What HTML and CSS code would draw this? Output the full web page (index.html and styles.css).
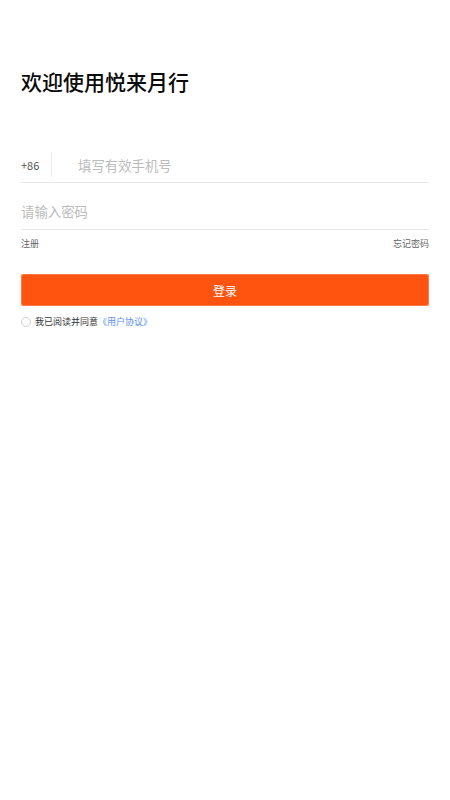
FILE: index.html
```html
<!DOCTYPE html>
<html lang="zh-CN">
<head>
<meta charset="utf-8">
<title>登录</title>
<link rel="stylesheet" href="styles.css">
</head>
<body>
<div class="page">
  <h1 class="title">欢迎使用悦来月行</h1>
  <div class="field phone">
    <span class="code">+86</span>
    <span class="divider"></span>
    <input class="input" type="tel" placeholder="填写有效手机号">
  </div>
  <div class="field pwd">
    <input class="input" type="password" placeholder="请输入密码">
  </div>
  <div class="links">
    <span>注册</span>
    <span>忘记密码</span>
  </div>
  <button class="login" type="button">登录</button>
  <div class="agree">
    <span class="radio"></span>
    <span class="agree-text">我已阅读并同意</span><span class="agree-link">《用户协议》</span>
  </div>
</div>
</body>
</html>
```
FILE: styles.css
```css
* { box-sizing: border-box; }
html, body { margin: 0; padding: 0; background: #fff; }
body {
  font-family: "Noto Sans CJK SC", "Noto Sans", sans-serif;
  color: #111;
}
.page {
  padding: 0 21px;
}
.title {
  margin: 0;
  padding-top: 66px;
  font-size: 21px;
  line-height: 30px;
  font-weight: 500;
  color: #0a0a0a;
  margin-bottom: 56px;
}
.field {
  display: flex;
  align-items: center;
  border-bottom: 1px solid #e8e8e8;
}
.phone {
  height: 31px;
  padding-bottom: 5px;
  position: relative;
}
.code {
  font-size: 11px;
  color: #555;
  width: 30px;
}
.divider {
  width: 1px;
  height: 25px;
  background: #ececec;
  margin-right: 26px;
  align-self: flex-start;
}
.input {
  flex: 1;
  border: 0;
  outline: 0;
  padding: 0;
  background: transparent;
  font-family: inherit;
  font-size: 13.4px;
  color: #333;
  height: 26px;
}
.input::placeholder { color: #bcbcbc; }
.pwd {
  height: 47px;
  padding-top: 12px;
  padding-bottom: 3px;
}
.links {
  display: flex;
  justify-content: space-between;
  margin-top: 8px;
  font-size: 9px;
  line-height: 12px;
  color: #666;
}
.login {
  display: block;
  width: 100%;
  margin-top: 24px;
  height: 32px;
  border: 0;
  border-radius: 3px;
  background: #ff5410;
  box-shadow: 0 0 0 1px #ff7a4a inset;
  color: #fff;
  font-family: inherit;
  font-size: 12px;
  padding: 0;
}
.agree {
  display: flex;
  align-items: center;
  margin-top: 10px;
  height: 12px;
  font-size: 9px;
  line-height: 12px;
}
.radio {
  width: 10px;
  height: 10px;
  border: 1px solid #d0d0d0;
  border-radius: 50%;
  margin-right: 4px;
}
.agree-text { color: #333; }
.agree-link { color: #5b8ef5; }
```
